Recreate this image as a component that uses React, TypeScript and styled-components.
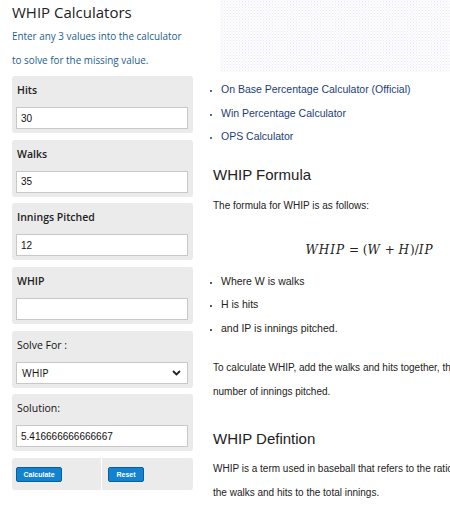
import React from "react";
import styled, { createGlobalStyle } from "styled-components";

const Global = createGlobalStyle`
  html, body { margin: 0; padding: 0; background: #fff; overflow: hidden; }
  body { font-family: "Open Sans", "Liberation Sans", sans-serif; color: #222; }
  * { box-sizing: border-box; }
`;

const Page = styled.div`
  display: flex;
  width: 800px;
  height: 510px;
`;

const LeftCol = styled.div`
  width: 200px;
  flex: none;
  padding-left: 12px;
  padding-right: 7px;
`;

const Title = styled.h1`
  margin: 0;
  font-family: "Open Sans", sans-serif;
  font-weight: 400;
  font-size: 15px;
  line-height: 24px;
  color: #222;
`;

const Intro = styled.p`
  margin: 0 0 4px;
  font-size: 9.9px;
  line-height: 24px;
  color: #1b5e91;
  white-space: nowrap;
`;

const Stack = styled.div`
  display: flex;
  flex-direction: column;
  gap: 6.7px;
`;

const Panel = styled.div`
  background: #ebebeb;
  border-radius: 3px;
  height: 57px;
  padding: 6px 5px 4px 4px;
  display: flex;
  flex-direction: column;
`;

const Label = styled.label`
  font-size: 10.5px;
  font-weight: 600;
  line-height: 16px;
  height: 16px;
  padding-left: 1px;
  color: #222;
  margin-bottom: 9px;
`;

const LabelPlain = styled(Label)`
  font-weight: 400;
  color: #111;
`;

const Field = styled.div`
  height: 22px;
  background: #fff;
  border: 1px solid #c8c8c8;
  display: flex;
  align-items: center;
  justify-content: space-between;
  padding: 0 6px 0 4px;
  font-family: "Liberation Sans", Arial, sans-serif;
  font-size: 10px;
  color: #111;
`;

const SelectText = styled.span`
  font-family: "Open Sans", sans-serif;
  font-size: 10.5px;
  padding-left: 1px;
`;

const ButtonRow = styled.div`
  display: grid;
  grid-template-columns: 89px 1fr;
  gap: 1px;
  height: 32px;
`;

const ButtonCell = styled.div<{ $side: "l" | "r" }>`
  background: #ebebeb;
  border-radius: ${(p) => (p.$side === "l" ? "3px 0 0 3px" : "0 3px 3px 0")};
  display: flex;
  align-items: center;
  padding-left: ${(p) => (p.$side === "l" ? "4px" : "6px")};
`;

const Btn = styled.button<{ $w: number }>`
  width: ${(p) => p.$w}px;
  height: 15px;
  padding: 0;
  border: 1px solid #0a5f9a;
  border-radius: 2px;
  background: #1283d0;
  color: #fff;
  font-family: "Liberation Sans", Arial, sans-serif;
  font-weight: 700;
  font-size: 7px;
  line-height: 13px;
`;

const RightCol = styled.div`
  width: 330px;
  flex: none;
  font-family: "Liberation Sans", Arial, sans-serif;
`;

const AdBox = styled.div`
  margin-left: 20px;
  width: 400px;
  height: 72px;
  background-color: #fdfdfe;
  background-image: radial-gradient(circle, #f1e6f0 0.6px, transparent 0.9px),
    radial-gradient(circle, #e4eef5 0.6px, transparent 0.9px);
  background-size: 3px 3px, 3px 3px;
  background-position: 0 0, 1.5px 1.5px;
`;

const List = styled.ul`
  margin: 6px 0 0;
  padding-left: 21px;
  list-style: disc;
  font-size: 10.5px;
  line-height: 23.5px;

  li::marker { font-size: 8px; }
`;

const LinkItem = styled.li`
  color: #1c3d78;
`;

const TextItem = styled.li`
  color: #222;
`;

const Content = styled.div`
  padding-left: 13px;
`;

const H2 = styled.h2`
  margin: 0;
  font-weight: 400;
  font-size: 15px;
  line-height: 24px;
  color: #222;
`;

const Para = styled.p`
  margin: 0;
  font-size: 10px;
  line-height: 24px;
  color: #222;
  white-space: nowrap;
`;

const Formula = styled.div`
  text-align: center;
  font-family: "DejaVu Serif", "Liberation Serif", serif;
  font-size: 12px;
  height: 45px;
  line-height: 40px;
  padding-top: 5px;
  padding-right: 4px;
  color: #222;
  i { font-style: italic; letter-spacing: 1px; }
`;

const Spacer = styled.div<{ $h: number }>`
  height: ${(p) => p.$h}px;
`;

export default function App() {
  return (
    <>
      <Global />
      <Page>
        <LeftCol>
          <Title>WHIP Calculators</Title>
          <Intro>
            Enter any 3 values into the calculator
            <br />
            to solve for the missing value.
          </Intro>
          <Stack>
            <Panel>
              <Label>Hits</Label>
              <Field>30</Field>
            </Panel>
            <Panel>
              <Label>Walks</Label>
              <Field>35</Field>
            </Panel>
            <Panel>
              <Label>Innings Pitched</Label>
              <Field>12</Field>
            </Panel>
            <Panel>
              <Label>WHIP</Label>
              <Field />
            </Panel>
            <Panel>
              <LabelPlain>Solve For :</LabelPlain>
              <Field>
                <SelectText>WHIP</SelectText>
                <svg width="9" height="6" viewBox="0 0 9 6">
                  <path d="M1 1l3.5 3.5L8 1" fill="none" stroke="#222" strokeWidth="1.8" />
                </svg>
              </Field>
            </Panel>
            <Panel>
              <LabelPlain>Solution:</LabelPlain>
              <Field>5.416666666666667</Field>
            </Panel>
            <ButtonRow>
              <ButtonCell $side="l">
                <Btn $w={46}>Calculate</Btn>
              </ButtonCell>
              <ButtonCell $side="r">
                <Btn $w={36}>Reset</Btn>
              </ButtonCell>
            </ButtonRow>
          </Stack>
        </LeftCol>
        <RightCol>
          <AdBox />
          <List>
            <LinkItem>On Base Percentage Calculator (Official)</LinkItem>
            <LinkItem>Win Percentage Calculator</LinkItem>
            <LinkItem>OPS Calculator</LinkItem>
          </List>
          <Content>
            <Spacer $h={14} />
            <H2>WHIP Formula</H2>
            <Spacer $h={7} />
            <Para>The formula for WHIP is as follows:</Para>
            <Spacer $h={7} />
            <Formula>
              <i>WHIP</i> = (<i>W</i> + <i>H</i>)/<i>IP</i>
            </Formula>
          </Content>
          <List style={{ marginTop: 0 }}>
            <TextItem>Where W is walks</TextItem>
            <TextItem>H is hits</TextItem>
            <TextItem>and IP is innings pitched.</TextItem>
          </List>
          <Content>
            <Spacer $h={16} />
            <Para>To calculate WHIP, add the walks and hits together, then divide by the</Para>
            <Para>number of innings pitched.</Para>
            <Spacer $h={23} />
            <H2>WHIP Defintion</H2>
            <Spacer $h={6} />
            <Para>WHIP is a term used in baseball that refers to the ratio of</Para>
            <Para>the walks and hits to the total innings.</Para>
          </Content>
        </RightCol>
      </Page>
    </>
  );
}
